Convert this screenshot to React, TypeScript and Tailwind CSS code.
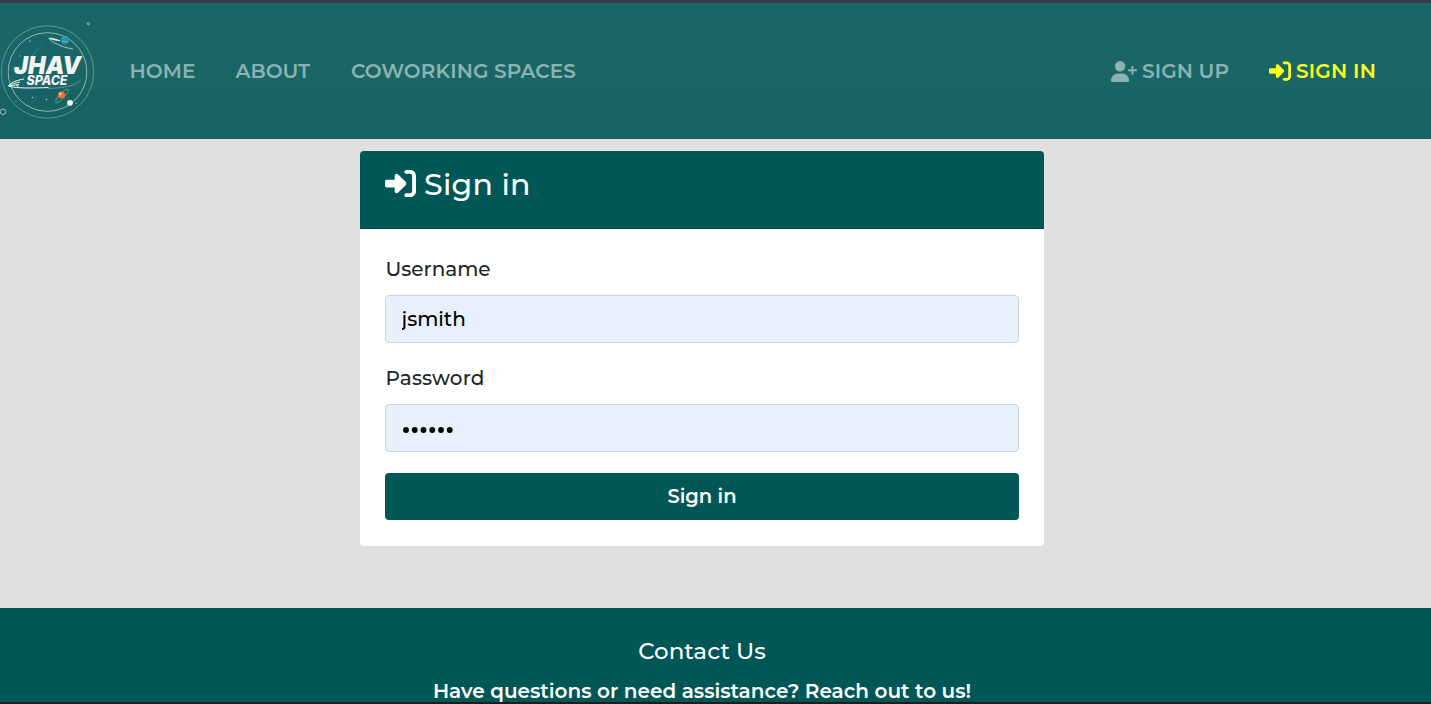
import React from "react";
import { FaRightToBracket, FaUserPlus } from "react-icons/fa6";

function Logo() {
  return (
    <svg className="mb-[2px] block h-[104px] w-[96px] shrink-0" viewBox="0 18 96 104" fill="none" aria-label="JHAV Space">
      <circle cx="47.5" cy="72" r="46.2" stroke="#a9cbc8" strokeOpacity=".6" strokeWidth=".8" />
      <circle cx="47.5" cy="72" r="39.3" stroke="#c4dedb" strokeOpacity=".75" strokeWidth=".9" />
      <circle cx="88.4" cy="23.7" r="1.1" stroke="#a9cbc8" strokeWidth=".8" />
      <circle cx="3" cy="111.8" r="2.8" stroke="#a9cbc8" strokeWidth=".9" />
      <g stroke="#9cc2bf" strokeOpacity=".25" strokeWidth=".7">
        <path d="M43 43 32 56M37 50l-6 7M37 96l-6 8M60 92l-5 8" />
      </g>
      <path d="M49 38.5c2 3.5 12 8.5 24 10.5" stroke="#c5dcda" strokeWidth=".8" />
      <path d="M49 38.2c3-.3 7 .8 11 2.6-4-.6-8-1.200-10-2.100Z" fill="#e1eeee" stroke="#e5f0ef" strokeWidth=".7" />
      <circle cx="65" cy="40.2" r="4.2" fill="#2192ad" />
      <path d="M62.5 38c2-2 4-1 5.5 0M62 41c2 1 4 0 6 1" stroke="#77b6b6" strokeWidth=".9" />
      <ellipse cx="62" cy="96" rx="9" ry="2.4" transform="rotate(-48 62 96)" stroke="#8eb4a3" strokeOpacity=".75" strokeWidth=".8" />
      <circle cx="61.5" cy="95" r="3.5" fill="#e8722e" />
      <circle cx="60.3" cy="94" r="1.4" fill="#f4c29c" />
      <circle cx="70" cy="102.8" r="2.9" fill="#fff" />
      <g fill="#b9d4d2">
        <circle cx="30" cy="41" r=".7" /><circle cx="20" cy="56" r=".6" />
        <circle cx="46.5" cy="99.5" r=".8" /><circle cx="32.5" cy="97.5" r=".7" />
        <circle cx="16" cy="101" r=".6" /><circle cx="76" cy="103.5" r=".6" />
      </g>
      <path d="M48 88.5c16-.5 29-3 33-9" stroke="#edf5f4" strokeOpacity=".4" strokeWidth=".8" />
      <path d="M24 79c-8 1.300-14 4-15.500 7 8 2.500 24 2.200 40 1.500" stroke="#edf5f4" strokeWidth="1" />
      <path d="M20 82c-5 1-10 2.500-11 4 5-.8 8-1.400 10-1.400-3 .8-3 1.300-1 1.700" stroke="#edf5f4" strokeWidth="1" />
      <g fill="#f3f3f3" fontFamily="Inter, sans-serif" fontStyle="italic" fontWeight="900">
        <text x="14" y="73.6" fontSize="24.5" textLength="67" lengthAdjust="spacingAndGlyphs">JHAV</text>
        <text x="26.5" y="85" fontSize="12.5" fontWeight="800" textLength="41" lengthAdjust="spacingAndGlyphs">SPACE</text>
      </g>
    </svg>
  );
}

export default function App() {
  return (
    <div className="flex h-[704px] flex-col overflow-hidden bg-[#e0e0e0] font-['Montserrat','Inter',sans-serif] font-medium">
      <header className="h-[139px] shrink-0 border-t-[3px] border-[#363b4f] bg-[linear-gradient(#1a6666_86px,#176363_86px)]">
        <nav className="flex h-[136px] items-center text-[20px] leading-[30px] font-semibold text-[#8cb3b3]">
          <Logo />
          <a className="ml-[33.5px] w-[106px] whitespace-nowrap tracking-[.1px]">HOME</a>
          <a className="w-[115.5px] whitespace-nowrap">ABOUT</a>
          <a className="whitespace-nowrap tracking-[.1px]">COWORKING SPACES</a>
          <a className="ml-auto flex w-[158px] items-center gap-[5px] whitespace-nowrap tracking-[.1px]">
            <FaUserPlus className="h-[21px] w-[26px] shrink-0" />SIGN UP
          </a>
          <a className="flex w-[162px] items-center gap-[5px] whitespace-nowrap tracking-[.2px] text-[#ffff1a]">
            <FaRightToBracket className="mb-px h-[22px] w-[22px] shrink-0" />SIGN IN
          </a>
        </nav>
      </header>

      <main className="h-[469px] shrink-0 pt-3">
        <section className="ml-[360px] h-[395px] w-[684px] overflow-hidden rounded bg-white">
          <h1 className="flex h-[78px] items-start gap-2 border-b border-[#004b49] bg-[#005755] px-[25px] pt-[14px] text-[30px] leading-[40px] font-medium tracking-[.25px] text-white">
            <FaRightToBracket className="mt-[3px] h-[31px] w-[31px]" />Sign in
          </h1>
          <form className="flex flex-col px-[25px] pt-[25px] text-[20px] leading-[30px]">
            <label htmlFor="username" className="pl-[.5px] text-[#212529]">Username</label>
            <input id="username" defaultValue="jsmith" className="mt-[11px] h-12 rounded border border-[#ced4da] bg-[#e8f0fe] px-[15.5px] text-black outline-none" />
            <label htmlFor="password" className="mt-5 pl-[.5px] tracking-[.15px] text-[#212529]">Password</label>
            <div id="password" className="mt-[11px] flex h-12 items-center rounded border border-[#ced4da] bg-[#e8f0fe] pt-[3px] pl-4">
              <svg className="h-2 w-[54px]" viewBox="0 0 54 8" aria-label="Hidden password">
                {[0, 1, 2, 3, 4, 5].map((dot) => (
                  <circle key={dot} cx={4 + dot * 8.75} cy="4" r="2.9" />
                ))}
              </svg>
            </div>
            <button type="button" className="mt-[21px] h-[47px] rounded bg-[#005755] pb-[2px] text-[19.5px] font-semibold text-white">Sign in</button>
          </form>
        </section>
      </main>

      <footer className="flex min-h-0 flex-1 flex-col items-center overflow-hidden border-b-2 border-[#211c1c] bg-[#005755] pt-7 pr-[27px] text-white">
        <h2 className="h-[30px] text-[23px] leading-[30px] font-medium whitespace-nowrap">Contact Us</h2>
        <p className="mt-[10px] text-[20px] leading-[30px] font-semibold whitespace-nowrap">Have questions or need assistance? Reach out to us!</p>
      </footer>
    </div>
  );
}
